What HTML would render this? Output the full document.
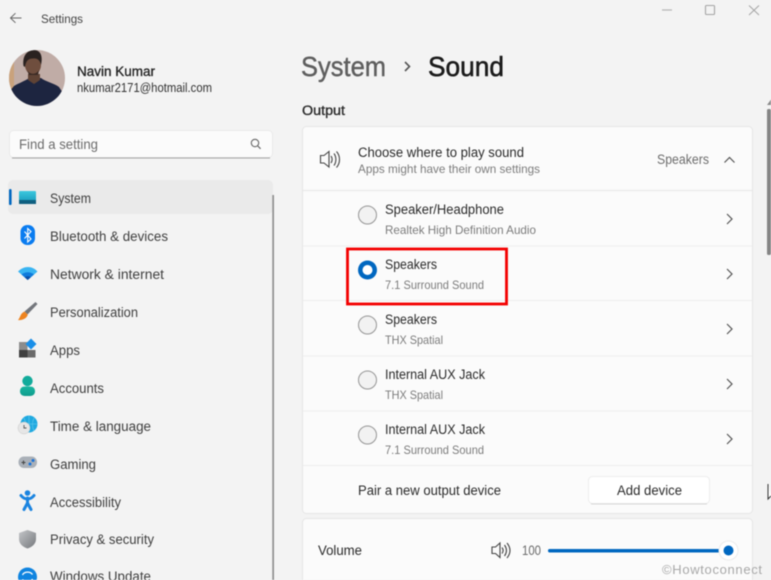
<!DOCTYPE html>
<html lang="en"><head><meta charset="utf-8"><title>Settings - Sound</title>
<style>
html,body{margin:0;padding:0;width:771px;height:580px;overflow:hidden;background:#f3f3f3}
svg{display:block;filter:blur(.4px)}
text{font-family:"Liberation Sans",sans-serif;white-space:pre}
.nav{font-size:13.5px;fill:#3f3f3f}
.t{font-size:13.5px;fill:#2b2b2b}
.s{font-size:12px;fill:#7c7c7c}
.ch{fill:none;stroke:#555;stroke-width:1.2}
.r{fill:#f2f2f2;stroke:#959595;stroke-width:1}
.sep{stroke:#eeeeee;stroke-width:1}
</style></head><body>
<svg width="771" height="580" viewBox="0 0 771 580" xmlns="http://www.w3.org/2000/svg">
<defs>
<clipPath id="av"><circle cx="37" cy="78" r="28"/></clipPath>
<linearGradient id="sys" x1="0" y1="0" x2="0" y2="1"><stop offset="0" stop-color="#3cc8de"/><stop offset="1" stop-color="#1295b8"/></linearGradient>
<linearGradient id="sh" x1="0" y1="0" x2="1" y2="1"><stop offset="0" stop-color="#c4c6c9"/><stop offset="1" stop-color="#75787c"/></linearGradient>
<linearGradient id="acc" x1="0" y1="0" x2="0" y2="1"><stop offset="0" stop-color="#19b6a0"/><stop offset="1" stop-color="#0f9c8c"/></linearGradient>
</defs>
<rect width="771" height="580" fill="#f3f3f3"/>

<!-- title bar -->
<path d="M21.5 18H10.5M15.5 13.2L10.5 18L15.5 22.8" fill="none" stroke="#666" stroke-width="1"/>
<text x="41" y="23" font-size="11.5" fill="#444" textLength="42" lengthAdjust="spacingAndGlyphs">Settings</text>
<path d="M662 10H672" stroke="#b5b5b5" stroke-width="1.2"/>
<rect x="705.5" y="5.5" width="9" height="9" rx="1" fill="none" stroke="#a5a5a5" stroke-width="1.1"/>
<path d="M749 5.5L759 15M759 5.5L749 15" stroke="#a5a5a5" stroke-width="1"/>

<!-- avatar -->
<g clip-path="url(#av)">
<rect x="9" y="50" width="56" height="56" fill="#c0aca6"/>
<rect x="9" y="50" width="5" height="56" fill="#c9a27c"/>
<path d="M9 106V92L14 86C19 83 25 81 29 78L41 78C46 82 54 83 59 87L65 96V106Z" fill="#1d2540"/>
<path d="M28 74H40V80L34 84L28 80Z" fill="#5f4335"/>
<ellipse cx="33" cy="65" rx="8" ry="9.500" fill="#6f4e3e"/>
<path d="M23.500 66C22 55 28 50 34 50C41 50 43 57 41 65C40 60 37 58 33 58.500C29 58.500 26 60 25 67Z" fill="#2a2220"/>
<path d="M27 70C30 75 36 75 39 70L38 75H29Z" fill="#3a2a24"/>
</g>
<text x="77" y="76" font-size="13.5" fill="#222" stroke="#222" stroke-width=".3" textLength="78" lengthAdjust="spacingAndGlyphs">Navin Kumar</text>
<text x="77" y="92" font-size="12.5" fill="#333" textLength="135" lengthAdjust="spacingAndGlyphs">nkumar2171@hotmail.com</text>

<!-- search -->
<rect x="9.5" y="130.500" width="263" height="27" rx="4" fill="#fbfbfb" stroke="#eaeaea"/>
<path d="M12 158H270" stroke="#a3a3a3" stroke-width="1"/>
<text x="19" y="149" font-size="14" fill="#6c6c6c" textLength="79" lengthAdjust="spacingAndGlyphs">Find a setting</text>
<circle cx="255" cy="143" r="3.700" fill="none" stroke="#666" stroke-width="1.100"/><path d="M257.800 146L260.600 148.800" stroke="#666" stroke-width="1.200"/>

<!-- sidebar selection -->
<rect x="8" y="180" width="265" height="34" rx="5" fill="#eaeaea"/>
<rect x="9" y="189" width="2.600" height="16" rx="1.300" fill="#0067c0"/>
<rect x="272.300" y="195" width="1.700" height="385" fill="#8f8f8f"/>

<!-- nav text -->
<text class="nav" x="50" y="203" textLength="41" lengthAdjust="spacingAndGlyphs">System</text>
<text class="nav" x="50" y="241" textLength="118" lengthAdjust="spacingAndGlyphs">Bluetooth &amp; devices</text>
<text class="nav" x="50" y="279" textLength="114" lengthAdjust="spacingAndGlyphs">Network &amp; internet</text>
<text class="nav" x="50" y="317" textLength="88" lengthAdjust="spacingAndGlyphs">Personalization</text>
<text class="nav" x="50" y="355" textLength="30" lengthAdjust="spacingAndGlyphs">Apps</text>
<text class="nav" x="50" y="393" textLength="54" lengthAdjust="spacingAndGlyphs">Accounts</text>
<text class="nav" x="50" y="431" textLength="101" lengthAdjust="spacingAndGlyphs">Time &amp; language</text>
<text class="nav" x="50" y="469" textLength="46" lengthAdjust="spacingAndGlyphs">Gaming</text>
<text class="nav" x="50" y="507" textLength="71" lengthAdjust="spacingAndGlyphs">Accessibility</text>
<text class="nav" x="50" y="544" textLength="104" lengthAdjust="spacingAndGlyphs">Privacy &amp; security</text>
<text class="nav" x="50" y="581" textLength="101" lengthAdjust="spacingAndGlyphs">Windows Update</text>

<!-- nav icons -->
<rect x="19" y="191" width="17" height="13" rx="1" fill="url(#sys)"/><rect x="19" y="200" width="17" height="4" fill="#0f5f80"/>
<rect x="20.500" y="225" width="14.500" height="20" rx="6.800" fill="#0a7cf0"/>
<path d="M24.500 231.500L31 239L27.700 242V228.500L31 231.500L24.500 238.500" fill="none" stroke="#fff" stroke-width="1.100"/>
<path d="M18 271.500C24 265.500 32 265.500 37.500 271.500L27.700 280Z" fill="#38b4f2"/>
<path d="M21.500 274.500C25 271.500 30.500 271.500 34 274.500L27.700 280Z" fill="#0f7bdc"/><path d="M24.700 277.200C26.500 276 29 276 30.700 277.200L27.700 280Z" fill="#0a4fa8"/>
<path d="M35.500 302L37.500 304L27.500 314.500L24.500 311.500Z" fill="#73767c"/>
<path d="M24.500 311.500L27.800 314.800C26.500 318.800 22 320.500 18 320C20.500 317.500 20 313.500 24.500 311.500Z" fill="#ee8420"/>
<rect x="19" y="342" width="8.500" height="8" fill="#8c8c8c"/><rect x="19" y="350" width="8.500" height="7.500" fill="#3f3f3f"/><rect x="27.500" y="350" width="8" height="7.500" fill="#6a6a6a"/>
<path d="M31 338.500L36.500 344L31 349.500L25.500 344Z" fill="#1a8fe8"/>
<circle cx="27.500" cy="381" r="5.200" fill="#12ab9b"/><path d="M20 391.500C20 388 22 386.500 25 386.500H30C33 386.500 35 388 35 391.500C35 394 33 396 30 396H25C22 396 20 394 20 391.500Z" fill="url(#acc)"/>
<circle cx="29" cy="424" r="8.500" fill="#1fa9e0"/><path d="M29 415.500V432M20.500 424H37.500M24 418C26 422 26 427 24 431M34 418C32 422 32 427 34 431" stroke="#6dcdf0" stroke-width=".6" fill="none"/>
<circle cx="24" cy="428" r="6" fill="#e6e6e6" stroke="#c8c8c8" stroke-width=".5"/><path d="M24 425V428H26.500" stroke="#555" stroke-width=".9" fill="none"/>
<rect x="18.500" y="456.500" width="18.500" height="11.500" rx="5.500" fill="#aab0b8"/>
<path d="M21.500 462.500H25.500M23.500 460.500V464.500" stroke="#444" stroke-width="1"/><circle cx="30" cy="464" r="1.500" fill="#1a73d8"/><circle cx="33" cy="460.500" r="1.500" fill="#1a73d8"/>
<circle cx="27.500" cy="493" r="2.800" fill="#1a84e0"/><path d="M21 495.500C23 498 25 499 27.500 499C30 499 32 498 34 495.500M27.500 498V503M27.500 503L24 509.500M27.500 503L31 509.500" fill="none" stroke="#1a84e0" stroke-width="3" stroke-linecap="round"/>
<path d="M27.500 530L36 533V539C36 544 32 547 27.500 548.500C23 547 19 544 19 539V533Z" fill="url(#sh)"/>
<circle cx="27.500" cy="577" r="9.500" fill="#0f84e0"/><path d="M22.500 575C24 571.500 30 571 32.500 574.500M32.500 579C31 582.500 25 583 22.500 579.500" fill="none" stroke="#fff" stroke-width="1.300"/>

<!-- heading -->
<text x="301" y="76" font-size="28" fill="#5e5e5e" stroke="#5e5e5e" stroke-width=".4" textLength="85" lengthAdjust="spacingAndGlyphs">System</text>
<path d="M405 62L409.500 66.500L405 71" fill="none" stroke="#555" stroke-width="1.600"/>
<text x="428" y="76" font-size="28" fill="#1b1b1b" stroke="#1b1b1b" stroke-width=".55" textLength="76" lengthAdjust="spacingAndGlyphs">Sound</text>
<text x="302" y="115" font-size="13.500" fill="#2a2a2a" stroke="#2a2a2a" stroke-width=".35" textLength="43" lengthAdjust="spacingAndGlyphs">Output</text>

<!-- output card -->
<rect x="302.500" y="126.500" width="450" height="387" rx="4" fill="#fbfbfb" stroke="#e6e6e6"/>
<path d="M303 190.500H752" stroke="#ebebeb" stroke-width="1.500"/>
<path class="sep" d="M303 246H752M303 300.500H752M303 356H752M303 411H752M303 465.500H752"/>

<path d="M320.500 155.500H324L329 151.500V167L324 163H320.500Z" fill="none" stroke="#444" stroke-width="1.100"/>
<path d="M331 156C332.500 158 332.500 161 331 163M334 153.500C336.500 157 336.500 162 334 165.500M336.500 151.500C340.500 156 340.500 163 336.500 167.500" fill="none" stroke="#444" stroke-width="1.100"/>
<text class="t" x="358" y="157" textLength="166" lengthAdjust="spacingAndGlyphs">Choose where to play sound</text>
<text class="s" x="358" y="173" textLength="182" lengthAdjust="spacingAndGlyphs">Apps might have their own settings</text>
<text x="657" y="164" font-size="13.500" fill="#6e6e6e" textLength="52" lengthAdjust="spacingAndGlyphs">Speakers</text>
<path class="ch" d="M724.500 162.500L729.500 157.500L734.500 162.500"/>

<!-- rows -->
<circle class="r" cx="367.500" cy="215" r="9"/>
<text class="t" x="385" y="214" textLength="119" lengthAdjust="spacingAndGlyphs">Speaker/Headphone</text>
<text class="s" x="385" y="234" textLength="151" lengthAdjust="spacingAndGlyphs">Realtek High Definition Audio</text>
<path class="ch" d="M727 214L732 219L727 224"/>

<circle cx="367.500" cy="270" r="9.500" fill="#0067c0"/><circle cx="367.500" cy="270" r="5" fill="#fff"/>
<text class="t" x="385" y="269" textLength="52" lengthAdjust="spacingAndGlyphs">Speakers</text>
<text class="s" x="385" y="289" textLength="99" lengthAdjust="spacingAndGlyphs">7.1 Surround Sound</text>
<path class="ch" d="M727 269L732 274L727 279"/>

<circle class="r" cx="367.500" cy="325" r="9"/>
<text class="t" x="385" y="324" textLength="52" lengthAdjust="spacingAndGlyphs">Speakers</text>
<text class="s" x="385" y="344" textLength="58" lengthAdjust="spacingAndGlyphs">THX Spatial</text>
<path class="ch" d="M727 324L732 329L727 334"/>

<circle class="r" cx="367.500" cy="380" r="9"/>
<text class="t" x="385" y="379" textLength="100" lengthAdjust="spacingAndGlyphs">Internal AUX Jack</text>
<text class="s" x="385" y="399" textLength="58" lengthAdjust="spacingAndGlyphs">THX Spatial</text>
<path class="ch" d="M727 379L732 384L727 389"/>

<circle class="r" cx="367.500" cy="435" r="9"/>
<text class="t" x="385" y="434" textLength="100" lengthAdjust="spacingAndGlyphs">Internal AUX Jack</text>
<text class="s" x="385" y="454" textLength="99" lengthAdjust="spacingAndGlyphs">7.1 Surround Sound</text>
<path class="ch" d="M727 434L732 439L727 444"/>

<!-- red box -->
<rect x="347.500" y="249" width="159" height="55" fill="none" stroke="#f30000" stroke-width="2.800"/>

<!-- pair -->
<text class="t" x="358" y="495" textLength="143" lengthAdjust="spacingAndGlyphs">Pair a new output device</text>
<rect x="588.500" y="476.500" width="121" height="27" rx="4" fill="#fff" stroke="#ececec"/>
<path d="M591 504H707" stroke="#d8d8d8"/>
<text class="t" x="617" y="495" textLength="65" lengthAdjust="spacingAndGlyphs">Add device</text>

<!-- volume card -->
<rect x="302.500" y="518.500" width="450" height="70" rx="4" fill="#fbfbfb" stroke="#e6e6e6"/>
<text class="t" x="318" y="555" textLength="44" lengthAdjust="spacingAndGlyphs">Volume</text>
<path d="M492 547H495.500L500 543V557.500L495.500 553.500H492Z" fill="none" stroke="#444" stroke-width="1.100"/>
<path d="M502 547.500C503.500 549.500 503.500 551.500 502 553.500M504.500 545C507 548.500 507 552.500 504.500 556M507 543C511 548 511 553 507 558" fill="none" stroke="#444" stroke-width="1.100"/>
<text x="522" y="555" font-size="13.500" fill="#6a6a6a" textLength="19" lengthAdjust="spacingAndGlyphs">100</text>
<rect x="548" y="549" width="174" height="3.500" rx="1.700" fill="#0067c0"/>
<circle cx="728.500" cy="550.500" r="9.500" fill="#fff" stroke="#ececec"/><circle cx="728.500" cy="550.500" r="5" fill="#0067c0"/>

<!-- watermark -->
<text x="662" y="574" font-size="13" fill="#a8a8a8" textLength="100" lengthAdjust="spacing">©Howtoconnect</text>

<!-- scrollbar -->
<path d="M767 105L771 99.500V105Z" fill="#8a8a8a"/>
<rect x="767" y="109" width="4" height="146" rx="1.500" fill="#858585"/>
<!-- cursor -->
<path d="M768 484V499L771 496" fill="#fff" stroke="#333" stroke-width="1"/>
</svg>
</body></html>
